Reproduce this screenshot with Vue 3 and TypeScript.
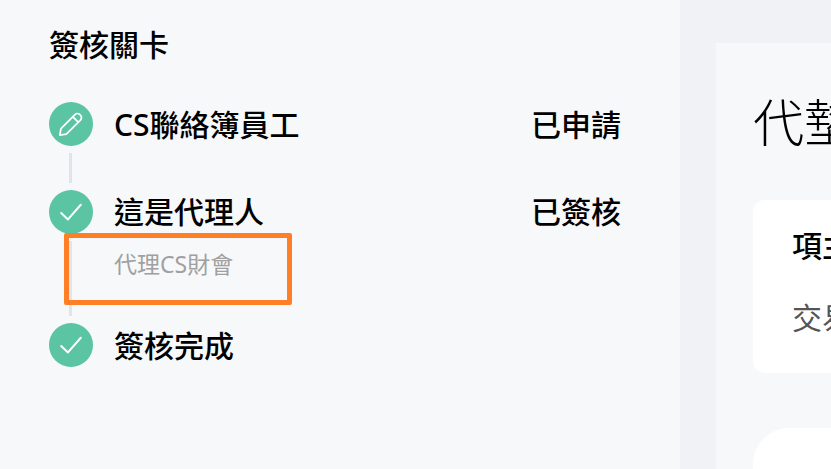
<script setup lang="ts">
interface Step {
  name: string
  status?: string
  sub?: string
  icon: 'pen' | 'check'
}

const steps: Step[] = [
  { name: 'CS聯絡簿員工', status: '已申請', icon: 'pen' },
  { name: '這是代理人', status: '已簽核', sub: '代理CS財會', icon: 'check' },
  { name: '簽核完成', icon: 'check' },
]
</script>

<template>
  <div class="page">
    <aside class="side">
      <h2 class="side-title">簽核關卡</h2>
      <ol class="steps">
        <li v-for="(s, i) in steps" :key="s.name" class="step" :class="{ last: i === steps.length - 1, tall: s.sub }">
          <div class="rail">
            <span class="dot">
              <svg v-if="s.icon === 'pen'" viewBox="0 0 24 24" class="ico" fill="none" stroke="#fff" stroke-width="1.5" stroke-linejoin="round" stroke-linecap="round">
                <path d="M3.4 16 15.4 3.9a3 3 0 0 1 4.2 0l.5.5a3 3 0 0 1 0 4.2L8 20.6l-5.6 1z" />
                <path d="M13.6 5.8l4.6 4.6" />
              </svg>
              <svg v-else viewBox="0 0 24 24" class="ico" fill="none" stroke="#fff" stroke-width="1.7" stroke-linejoin="round" stroke-linecap="round">
                <path d="M3.6 12.8 9.4 18.4 20.4 5.8" />
              </svg>
            </span>
            <span v-if="i < steps.length - 1" class="line"></span>
          </div>
          <div class="body">
            <div class="row">
              <span class="name">{{ s.name }}</span>
              <span v-if="s.status" class="status">{{ s.status }}</span>
            </div>
            <div v-if="s.sub" class="sub">{{ s.sub }}</div>
          </div>
          <span v-if="s.sub" class="highlight"></span>
        </li>
      </ol>
    </aside>
    <main class="main">
      <section class="panel">
        <h1 class="panel-title">代墊款項申請</h1>
        <div class="card">
          <div class="card-head">項主</div>
          <div class="card-text">交易日期</div>
        </div>
        <div class="card2"></div>
      </section>
    </main>
  </div>
</template>

<style>
html, body { margin: 0; overflow: hidden; }
</style>

<style scoped>
.page {
  display: flex;
  width: 831px;
  height: 469px;
  overflow: hidden;
  background: #f0f2f6;
  font-family: "Noto Sans", "Noto Sans CJK TC", sans-serif;
  color: #000;
}
.side {
  flex: 0 0 680px;
  box-sizing: border-box;
  padding: 23px 59px 0 49px;
  background: #f7f8fa;
}
.side-title {
  margin: 0 0 36px;
  font-size: 30px;
  line-height: 43px;
  font-weight: 500;
}
.steps { margin: 0; padding: 0; list-style: none; }
.step {
  position: relative;
  display: flex;
  gap: 21px;
  height: 88px;
}
.step.tall { height: 133px; }
.step.last { height: 44px; }
.rail {
  display: flex;
  flex-direction: column;
  width: 44px;
}
.dot {
  display: flex;
  align-items: center;
  justify-content: center;
  flex: none;
  width: 44px;
  height: 44px;
  border-radius: 50%;
  background: #5ac4a3;
}
.ico { width: 28px; height: 28px; }
.line {
  width: 3px;
  flex: 1;
  margin: 7px 0 7px 20px;
  background: #e2e4ec;
}
.body { flex: 1; min-width: 0; }
.row {
  display: flex;
  justify-content: space-between;
  height: 45px;
  align-items: center;
}
.tall .row { height: 44px; }
.name, .status {
  font-size: 30px;
  line-height: 44px;
  font-weight: 500;
}
.sub {
  margin-top: 14px;
  font-size: 23px;
  line-height: 33px;
  color: #a0a0a0;
}
.highlight {
  position: absolute;
  left: 15px;
  top: 43px;
  width: 228px;
  height: 72px;
  box-sizing: border-box;
  border: 5px solid #ff7f27;
  border-radius: 2px;
}
.main {
  flex: 1;
  min-width: 0;
  padding: 43px 0 0 36px;
}
.panel {
  box-sizing: border-box;
  width: 700px;
  height: 600px;
  padding: 38px 37px;
  background: #f7f8fa;
}
.panel-title {
  margin: 0 0 37px;
  font-size: 51px;
  line-height: 82px;
  height: 82px;
  font-weight: 300;
  white-space: nowrap;
}
.card {
  box-sizing: border-box;
  height: 173px;
  padding: 25px 39px;
  background: #fff;
  border-radius: 12px;
}
.card-head {
  font-size: 30px;
  line-height: 42px;
  font-weight: 500;
  white-space: nowrap;
}
.card-text {
  margin-top: 30px;
  font-size: 30px;
  line-height: 42px;
  color: #555;
  white-space: nowrap;
}
.card2 {
  margin-top: 55px;
  height: 200px;
  background: #fff;
  border-radius: 36px 36px 0 0;
}
</style>
